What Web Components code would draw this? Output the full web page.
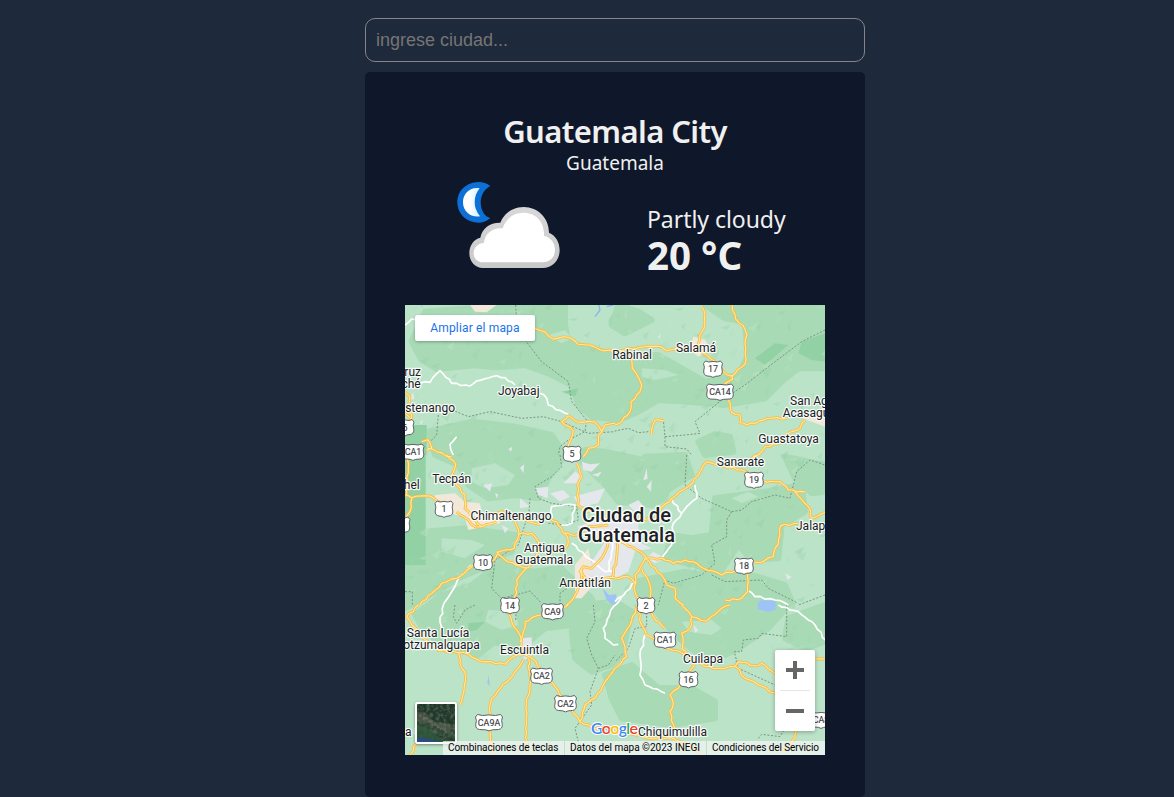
<!DOCTYPE html>
<html lang="es">
<head>
<meta charset="utf-8">
<title>Clima</title>
<style>
html, body { margin: 0; height: 100%; overflow: hidden; background: #1e293b; }
</style>
</head>
<body>
<weather-app></weather-app>
<script>
const define = (name, html, setup) => customElements.define(name, class extends HTMLElement {
  constructor() {
    super();
    this.attachShadow({ mode: 'open' }).innerHTML = html;
    if (setup) setup(this.shadowRoot, this);
  }
});

define('city-search', `
<style>
:host { display: block; }
input { display: block; box-sizing: border-box; width: 100%; height: 44px; margin: 0; padding: 0 10px; border: 1px solid #858585; border-radius: 10px; background: transparent; color: #eee; outline: none; font: 18px "Liberation Sans", Arial, sans-serif; }
input::placeholder { color: #757575; opacity: 1; }
</style>
<input type="text" placeholder="ingrese ciudad...">`);

define('weather-icon', `
<style>:host { display: block; width: 128px; height: 128px; } svg { display: block; }</style>
<svg width="128" height="128" viewBox="18 -30 384 384">
  <defs>
    <linearGradient id="rim" x1="0" y1="0" x2="0" y2="1"><stop offset="0" stop-color="#d8d8d8"/><stop offset="1" stop-color="#c8c8c8"/></linearGradient>
    <linearGradient id="moon" x1="0" y1="0" x2="1" y2="0"><stop offset=".4" stop-color="#fff"/><stop offset="1" stop-color="#c9efff"/></linearGradient>
    <filter id="soft" x="-5%" y="-5%" width="110%" height="110%"><feGaussianBlur stdDeviation="2.2"/></filter>
  </defs>
  <g filter="url(#soft)">
    <path d="M151 48C134 34 108 33 86 43C64 53 51 75 52 99C53 124 69 146 92 154C114 162 137 158 151 144C134 140 123 121 122 98C122 75 134 57 151 48Z" fill="#0b6fd6"/>
    <path d="M119 55C88 50 68 73 69 99C70 124 91 143 120 139C109 125 104 112 104 97C104 81 109 67 119 55Z" fill="url(#moon)"/>
    <path d="M128 294C106 294 88 275 88 250C88 226 101 208 121 203C126 174 151 157 181 158C193 129 219 111 251 111C294 111 327 145 327 188C347 197 359 216 359 241C359 271 336 294 308 294Z" fill="url(#rim)"/>
    <path d="M128 277C112 277 101 265 101 249C101 232 114 220 132 218C134 192 157 172 188 175C197 147 220 128 251 128C288 128 314 156 312 197C333 202 345 219 345 240C345 262 329 277 308 277Z" fill="#fff"/>
  </g>
</svg>`);

define('weather-summary', `
<style>
:host { display: grid; grid-template-columns: 210px 178px; grid-template-rows: 62px 131px; height: 193px; color: #f0f0f0; font-family: "Noto Sans", sans-serif; }
header { grid-column: 1 / 3; width: 420px; text-align: center; }
h1 { margin: 0; font-size: 31px; line-height: 38px; font-weight: 600; letter-spacing: -.6px; }
p { margin: 0; }
.country { font-size: 19px; line-height: 26px; }
.icon { display: flex; justify-content: center; margin-top: -14px; }
.now { padding: 29px 0 0 32px; white-space: nowrap; }
.cond { font-size: 23px; line-height: 32px; font-weight: 400; letter-spacing: -.05px; }
.temp { font-size: 38.5px; line-height: 40px; font-weight: 700; }
</style>
<header><h1><slot name="city"></slot></h1><p class="country"><slot name="country"></slot></p></header>
<div class="icon"><weather-icon></weather-icon></div>
<div class="now"><p class="cond"><slot name="condition"></slot></p><p class="temp"><slot name="temperature"></slot></p></div>`);

define('map-zoom', `
<style>
:host { display: flex; flex-direction: column; width: 40px; height: 81px; background: #fff; border-radius: 2px; box-shadow: 0 1px 4px rgba(0,0,0,.3); }
svg { display: block; flex: 1; }
hr { width: 30px; height: 1px; margin: 0 auto; border: 0; background: #e6e6e6; }
</style>
<svg width="40" height="40"><path d="M11 20H29M20 11V29" stroke="#666" stroke-width="4"/></svg>
<hr>
<svg width="40" height="40"><path d="M11 20H29" stroke="#666" stroke-width="4"/></svg>`);

define('map-link', `
<style>:host { display: flex; align-items: center; justify-content: center; width: 120px; height: 26px; background: #fff; border-radius: 2px; box-shadow: 0 1px 3px rgba(0,0,0,.3); color: #1a73e8; font: 12px Roboto, sans-serif; letter-spacing: .15px; }</style>
<span><slot></slot></span>`);

define('map-credits', `
<style>
:host { display: flex; gap: 1px; height: 14px; font: 10px/14px Roboto, sans-serif; color: #000; }
span { box-sizing: border-box; flex: none; padding-left: 5px; background: rgba(245,245,245,.72); white-space: nowrap; }
span:nth-of-type(1) { width: 121px; letter-spacing: -.08px; } span:nth-of-type(2) { width: 141px; } span:nth-of-type(3) { width: 118px; letter-spacing: -.08px; }
</style>
<span>Combinaciones de teclas</span><span>Datos del mapa ©2023 INEGI</span><span>Condiciones del Servicio</span>`);

define('map-satellite', `
<style>:host { display: block; box-sizing: border-box; width: 42px; height: 42px; border: 2px solid #fff; border-radius: 3px; overflow: hidden; box-shadow: 0 1px 3px rgba(0,0,0,.4); } svg { display: block; }</style>
<svg width="38" height="38" viewBox="0 0 38 38">
  <filter id="n" x="0" y="0" width="100%" height="100%"><feTurbulence type="fractalNoise" baseFrequency=".3" numOctaves="3" seed="4"/><feColorMatrix values="0 0 0 0 .5  0 0 0 0 .55  0 0 0 0 .45  1.8 0 0 0 -.72"/></filter>
  <rect width="38" height="38" fill="#20382a"/>
  <path d="M0 9L18 17L38 21V35L18 31L0 27Z" fill="#304736"/>
  <path d="M0 7L10 10L17 18L31 20L38 25L27 27L13 19L5 17L0 17Z" fill="#565c4c" opacity=".6"/>
  <rect width="38" height="38" filter="url(#n)" opacity=".4"/>
  <path d="M0 21L12 25L24 35L38 37V38H0Z" fill="#2f5a3c" opacity=".8"/>
  <path d="M0 33L12 35L26 38H0Z" fill="#2b4a80"/>
</svg>`);

/* Map geometry, three units to a pixel. Woodland spans the whole map; the rest is kept in sectors of 630x450 units. */
const WOODS = 'M60 20L330 0H480L480 60L490 110L560 135L660 150L760 150L830 190L900 230L1000 210L1050 110L1260 100V190L1180 190L1130 230L1080 280L960 300L850 290L760 285L700 320L640 345L560 335L520 300L500 240L430 205L360 180L240 190L170 185L100 195L50 165L20 110Z M900 0H1260V110L1180 170L1100 150L1030 180L1020 50L960 40Z M640 0L700 20L740 45L660 85L620 60Z M70 380L200 350L330 365L440 390L480 450L430 520L400 580L330 570L250 580L190 540L160 480L90 450Z M540 435L600 440L740 470L800 510L780 580L740 600L640 590L600 540L530 470Z M880 410L930 388L975 395L985 440L900 450Z M930 580L1080 560L1190 540L1200 620L1130 660L1120 760L1040 765L1000 720L940 810L870 780L780 760L800 690L860 700L920 690Z M720 455L840 450L860 510L780 560L750 500Z M60 680L180 670L330 690L320 740L270 760L230 790L160 820L110 850L0 910V760L60 760Z M290 770L380 800L470 790L560 880L580 950L540 1010L500 960L420 970L360 1020L340 1040L270 1010L220 1050L130 1030L60 980L30 930L110 870L200 840Z M690 830L840 800L930 815L1040 810L1140 840L1160 890L1090 970L1000 1030L960 1050L870 1040L800 980L740 900L700 870Z M600 1110L680 1080L760 1150L860 1150L930 1190L930 1240L800 1260L650 1240L620 1180Z M1150 940L1260 900V1010L1200 1030L1140 1000Z M1140 455L1260 480V560L1220 565L1170 520Z M530 900L630 890L680 920L650 1050L620 1080L560 1100L510 1060L500 980Z';
const SECTORS = [[0,0],[630,0],[0,450],[630,450],[0,900],[630,900]];
const LAND = [
  ['#bbe3c8', [
    'M100 200L210 190L310 200L380 220L430 250L410 290L330 290L260 310L140 300L90 260Z M430 90L480 75L500 100L470 115Z',
    'M80 190L150 195L190 210L120 225L80 215Z',
    'M200 40L270 25L330 60L310 90L240 100L200 80Z M110 250L200 255L240 270L180 310L110 290Z',
    'M350 130L400 110L430 125L380 145Z',
    'M250 15L330 20L340 60L290 75L240 50Z',
    'M200 50L290 45L320 70L290 90L220 80Z'
  ]],
  ['#92d1a4', [
    'M0 360H65V450H0Z M470 260L520 250L510 275Z',
    'M560 110L630 85V170L590 165L550 145Z M420 160L480 115L520 120L450 180Z',
    'M0 0H62V330H0Z', '', 'M190 55L240 50L215 75L190 80Z', ''
  ]],
  ['#f1e8d9', ['M195 0H275L245 22L210 20Z','M235 95L270 105L285 130L250 155L225 135Z M540 330L630 325V365L590 350Z','M90 120L150 115L180 140L225 145L230 175L290 170L285 205L190 225L180 190L130 170L90 175Z M510 330L550 280L570 385L530 430L510 430Z','','','']],
  ['#e4e7eb', [
    'M310 432L322 425L318 440Z M45 350L55 345L48 360Z M10 285L25 262L28 282Z','M130 95L138 85L133 103Z',
    'M235 90L262 85L255 110Z M270 115L280 118L275 130Z M345 38L358 28L355 55Z M390 100L430 95L428 130L400 120Z M435 115L475 105L495 125L465 140Z M475 85L510 50L530 60L515 85Z M530 20L555 28L585 25L560 50L535 45Z M505 125L560 110L600 100L580 145L525 155Z M560 60L590 50L580 65Z M345 130L375 155L345 160Z M515 215L560 200L630 180V370L575 385L550 360L560 320L600 260L540 225Z M290 210L310 220L300 235Z',
    'M0 175L50 165L70 200L70 260L110 280L60 290L40 350L0 370Z M40 150L70 135L90 160L60 170Z M95 95L110 75L108 110Z M85 75L95 40L98 72Z M115 290L150 310L120 325L95 310Z M510 355L530 365L518 375Z',
    'M350 100L380 97L380 150L360 165L345 135Z','M235 60L250 75L240 85Z M268 45L290 40L275 55Z'
  ]],
  ['#9ec3f7', ['','','M592 400L612 420L634 418V445L620 448L605 435Z','M430 440L442 436L482 438V450H428Z','M250 210L255 243L247 235Z','M428 0H482L482 14L460 20L430 15Z']]
];
const ROADS = [
  'M390 70L420 80L445 103L490 97L520 118L555 120L585 134L640 138 M0 262L15 275L12 300L20 345L0 325 M50 410L68 404L80 428L65 436 M68 430L95 440L140 456 M630 355L600 360L590 380L570 352L515 350L490 332L470 350L505 378L490 420L495 445 M595 370L580 392L580 420L550 430L535 455',
  'M10 137L70 128L140 126L155 138L190 128L235 130 M260 5L270 25L267 70L255 90L245 125L285 160L325 200L350 214L390 178L392 130L390 115L396 90L385 62L362 42L352 0 M45 145L52 190L80 240L75 260L48 290L45 320L20 350L0 360 M350 210L353 222L325 240 M340 285L350 322L375 330L375 353L395 360L460 340L515 340 M570 345L555 370L520 385L500 410L450 425L430 450 M110 388L120 345L147 348',
  'M125 0L152 28L138 65L155 90L180 120L180 160L200 185L230 215L275 200 M155 170L210 215L240 212 M0 120L20 128L75 123L110 145 M5 0L10 40L5 120 M20 130L15 170L0 195 M265 175L290 170L320 185L350 190L370 200L405 208 M330 200L342 237L328 280L280 290L260 320 M342 237L380 235L400 260L395 300L370 338L332 330L300 315L275 290 M365 338L335 375L330 440 M205 330L185 345L155 370L110 385L80 415L45 450 M515 25L530 65L518 90L518 150 M518 150L540 170L600 175 M435 190L455 200L475 235L515 240L550 215L610 210 M480 235L490 260L480 280L440 290 M610 260L590 310L560 340L535 335L525 350L540 370L575 380L600 370L630 368 M530 340L530 370L510 420L485 450 M640 250L636 300L622 368',
  'M0 250L30 265L65 285L95 310L140 310L175 325L210 315L235 320L265 340L320 360L365 345 M120 200L135 165L170 130L220 95L240 70L275 20L330 35L380 45L400 55 M410 10L430 0 M430 78L495 80L520 105L570 110 M540 110L580 155L590 190 M415 320L440 322L475 305L495 240L497 212L550 205 M398 350L398 410L380 430L330 435 M90 310L60 360L60 410L75 450 M90 310L140 360L155 390L180 400L180 430L205 450 M80 340L105 390L105 430L95 450 M0 372L40 365L60 385 M60 190L120 190 M590 190L630 172',
  'M40 0L5 35L20 60L55 100L100 137L175 142L230 170L300 178L325 155L350 150 M310 25L320 50L345 90L350 150 M490 0L460 15L380 38L360 50L355 80L345 110 M345 148L385 162L430 225L450 245L490 300L525 350L560 368 M355 165L330 200L260 280L255 300L255 380L262 450 M370 160L375 240L364 300L362 370L370 450 M162 140L165 175L182 215L165 300 M525 350L540 300L570 280L600 230L630 190 M40 400L15 450',
  'M65 0L80 60L95 90L145 125L215 150 M70 0L45 60L20 100L35 155L0 190 M90 0L115 35L150 70 M200 0L230 35L275 48L320 10L345 0 M230 35L225 70L200 85L202 130 M200 130L240 170L270 185L310 190L360 185 M240 178L190 250L165 270L175 295L165 320L180 375 M360 185L370 170L420 182L440 175L480 205L520 230 M362 185L390 220L430 240L500 275 M600 162L630 162 M100 400L170 398L220 420L260 445 M-70 368L-20 370L60 390L100 400 M545 375L540 400L520 430L490 440'
];
const WHITE = [
  'M0 60L20 42L55 40 M45 235L75 232L105 197L140 235L195 243L215 228L265 214L300 218L330 240 M405 265L425 280L430 300L490 328 M155 395L135 418L145 450','',
  'M440 195L440 155L510 150L500 205L470 210 M500 265L600 350L630 350 M200 330L160 370L120 440L115 450 M625 250L610 350',
  'M170 135L200 175L245 130L240 90 M200 175L175 205L170 270L140 310 M395 405L420 425L480 435L520 450 M0 440L45 400L60 380',
  'M115 0L105 50L110 80 M650 -25L625 5L595 70L600 100L625 120L640 118',
  'M90 90L75 150L75 210L90 240L150 265 M490 0L550 20L600 60L640 120'
];
const BORDERS = [
  'M332 0L335 50L360 105L410 170L490 230L500 290L545 345L540 380L490 405L465 425L460 450 M130 310L190 335L255 320L350 340L415 335L470 350L550 385L630 380 M100 330L95 390L75 410',
  'M630 75L560 110L480 170L390 240L320 285L240 350L255 385L210 390L150 395L145 345 M100 380L70 383L40 370L0 378 M150 395V425L215 432L230 450',
  'M465 0L470 35L440 65L390 95L400 130L440 145L515 155L520 195L480 210L430 205 M375 130L372 170L340 270L270 315L260 400L290 430L350 415L375 408L410 445 M0 410H22V450 M465 450V415L500 390',
  'M215 0L210 90L260 130L350 170L380 165L410 140L480 120L525 130L545 50L585 15L630 30 M350 170L335 195V245L290 270L300 325L260 360L175 385L150 375L130 450 M290 360L330 380L440 375L460 400L550 445 M630 420L590 435L550 450',
  'M150 0L145 35L155 55L180 15L210 0 M335 -60L332 50 M565 0L570 50L545 100L560 150L580 190L555 260L560 300L510 370L525 430 M580 190L610 180L630 150',
  'M95 0V65L60 70L40 130L0 170 M515 0V95L440 85L430 100L385 105L380 140L358 140L370 190L480 240 M430 400L440 388L495 395L510 370'
];
const LABELS = [
  ['Rabinal',227,54],['Salamá',291,47],['ruz',16,71,'end'],['ché',15.7,83,'end'],['Joyabaj',113.7,89.5],['stenango',50,107,'end'],
  ['San Ag',385,100,'start'],['Acasagu',377.7,112,'start'],['Guastatoya',383.5,138],['Tecpán',46.7,178],['hel',14.7,184,'end'],
  ['Chimaltenango',106,215],['Antigua',139.5,247],['Guatemala',139,259],['Amatitlán',180,282],['Sanarate',335.5,161],['Jalap',391,225,'start'],
  ['Santa Lucía',33,332],['otzumalguapa',74.7,344,'end'],['Escuintla',119.5,349],['a G',0,431,'start'],['Cuilapa',298,358],['Chiquimulilla',267.5,431]
];
const SHIELDS = [['5',167,149],['17',308,64],['CA14',315,87],['1',39,204],['19',349,175],['10',78,257.5],['18',339,261],['14',105,300.5],['CA9',147.5,306.5],['2',241,300.5],['CA1',260,335],['16',283.5,374.5],['CA2',136.5,371],['CA2',160.5,398.5],['CA9A',84,417.5],['CA1',8,147],['6',0,122.5],['',-4,220],['CA8',416,415]];

const sector = (list, attrs) => list.map((d, i) => d ? `<path transform="translate(${SECTORS[i]})" d="${d}" ${attrs}/>` : '').join('');

function relief() {
  let s = 20231, out = '';
  const rnd = () => (s = (s * 16807) % 2147483647) / 2147483647;
  const tones = ['#9fd5ae', '#b2debf', '#c0e5c4', '#98d2a8'];
  for (let i = 0; i < 420; i++) {
    const x = rnd() * 1260, y = rnd() * 1080, a = 8 + rnd() * 26, b = 5 + rnd() * 17;
    out += `<path d="M${x | 0} ${y | 0}l${a | 0} ${-b | 0}l${(-a * .35) | 0} ${(b * 1.7) | 0}z" fill="${tones[i % 4]}" opacity=".4"/>`;
  }
  return out;
}
/* Slight zigzag along each segment, the way mountain roads wind. */
function winding(d) {
  let k = 7;
  return d.split('M').filter(p => p.trim()).map(part => {
    const pts = part.trim().split('L').map(p => p.trim().split(/\s+/).map(Number));
    let [x, y] = pts[0], out = `M${x} ${y}`;
    for (const [nx, ny] of pts.slice(1)) {
      const len = Math.hypot(nx - x, ny - y) || 1, steps = Math.max(1, Math.round(len / 14));
      for (let j = 1; j <= steps; j++) {
        k = (k * 37 + 11) % 101;
        const off = j === steps ? 0 : (k / 101 - .5) * 7;
        out += `L${(x + (nx - x) * j / steps - (ny - y) / len * off).toFixed(1)} ${(y + (ny - y) * j / steps + (nx - x) / len * off).toFixed(1)}`;
      }
      x = nx; y = ny;
    }
    return out;
  }).join(' ');
}
function shield([t, x, y]) {
  const w = [18, 18, 19, 22, 27][t.length] / 2;
  return `<g transform="translate(${x} ${y})"><path d="M${-w + 2} -8Q${-w / 2} -6.2 0 -7.6Q${w / 2} -6.2 ${w - 2} -8L${w} -5.5Q${w - 1.6} -2 ${w - .2} 2Q${w} 6.5 ${w - 4} 7Q2 7 0 8.4Q-2 7 ${-w + 4} 7Q${-w} 6.5 ${-w + .2} 2Q${-w + 1.6} -2 ${-w} -5.5Z" fill="#fff" stroke="#5f6368" stroke-width="1"/>${t && `<text y="3.4" text-anchor="middle" font-size="8.9" fill="#3c4043" stroke="#3c4043" stroke-width=".15">${t}</text>`}</g>`;
}

define('map-canvas', `
<style>:host { display: block; width: 420px; height: 450px; } svg { display: block; font-family: Roboto, sans-serif; }</style>
<svg width="420" height="450" viewBox="0 0 420 450"></svg>`, root => {
  const roads = ROADS.map(winding);
  root.querySelector('svg').innerHTML = `
  <rect width="420" height="450" fill="#bbe3c8"/>
  <g transform="scale(.333333)" stroke-linejoin="round">
    <path d="${WOODS}" fill="#a7dab5" stroke="#a7dab5" stroke-width="18"/>
    ${LAND.slice(0, 2).map(([c, l]) => sector(l, `fill="${c}"`)).join('')}
    ${relief()}
    ${LAND.slice(2).map(([c, l]) => sector(l, `fill="${c}"`)).join('')}
    <path d="M570 35L585 15L580 -5M605 5L625 0" fill="none" stroke="#8db4ef" stroke-width="4"/>
    <g fill="none">
      ${sector(BORDERS, 'stroke="#7b9384" stroke-width="3" stroke-dasharray="6 5"')}
      ${sector(WHITE.map(winding), 'stroke="#fff" stroke-width="5"')}
      ${sector(roads, 'stroke="#f8bd43" stroke-width="8.5"')}
      ${sector(roads, 'stroke="#ffeaa3" stroke-width="3.2"')}
    </g>
  </g>
  ${SHIELDS.map(shield).join('')}
  <g font-size="12" fill="#202124" stroke="#fff" stroke-opacity=".85" stroke-width="2.4" stroke-linejoin="round" paint-order="stroke">
    ${LABELS.map(([t, x, y, a]) => `<text x="${x}" y="${y}" text-anchor="${a || 'middle'}">${t}</text>`).join('')}
    <g font-size="20" font-weight="500" text-anchor="middle" stroke-width="3"><text x="221.5" y="217" textLength="89">Ciudad de</text><text x="221.5" y="237" textLength="97">Guatemala</text></g>
  </g>
  <text x="186" y="429" font-family="Lato, sans-serif" font-size="16" font-weight="600" textLength="47" stroke="#fff" stroke-width="2" paint-order="stroke"><tspan fill="#4285f4">G</tspan><tspan fill="#ea4335">o</tspan><tspan fill="#fbbc04">o</tspan><tspan fill="#4285f4">g</tspan><tspan fill="#34a853">l</tspan><tspan fill="#ea4335">e</tspan></text>`;
});

define('city-map', `
<style>
:host { display: block; position: relative; width: 420px; height: 450px; overflow: hidden; }
map-link { position: absolute; left: 10px; top: 10px; }
map-satellite { position: absolute; left: 10px; top: 397px; }
map-credits { position: absolute; right: 0; bottom: 0; }
map-zoom { position: absolute; right: 10px; bottom: 24px; }
</style>
<map-canvas></map-canvas>
<map-satellite></map-satellite>
<map-credits></map-credits>
<map-link>Ampliar el mapa</map-link>
<map-zoom></map-zoom>`);

define('weather-card', `
<style>:host { display: block; box-sizing: border-box; padding: 40px 40px 0; border-radius: 5px; background: #0f172a; }</style>
<slot></slot>`);

define('weather-app', `
<style>
:host { display: flex; flex-direction: column; gap: 10px; box-sizing: border-box; width: 500px; height: 797px; margin: 0 0 0 365px; padding-top: 18px; }
weather-card { flex: 1; }
</style>
<city-search></city-search>
<weather-card>
  <weather-summary>
    <span slot="city">Guatemala City</span>
    <span slot="country">Guatemala</span>
    <span slot="condition">Partly cloudy</span>
    <span slot="temperature">20 °C</span>
  </weather-summary>
  <city-map></city-map>
</weather-card>`);
</script>
</body>
</html>
